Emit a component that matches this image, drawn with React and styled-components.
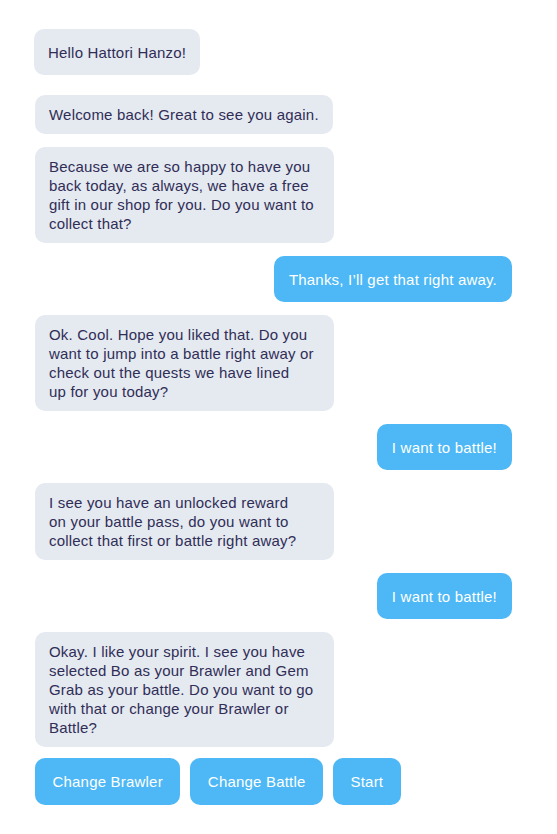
import React from 'react'
import styled, { createGlobalStyle } from 'styled-components'

const GlobalStyle = createGlobalStyle`
    body {
        margin: 0;
        background: #ffffff;
        font-family: "Liberation Sans", Arial, sans-serif;
    }
`

const messages = [
    { from: 'bot', first: true, lines: ['Hello Hattori Hanzo!'] },
    { from: 'bot', lines: ['Welcome back! Great to see you again.'] },
    {
        from: 'bot',
        wide: true,
        lines: [
            'Because we are so happy to have you',
            'back today, as always, we have a free',
            'gift in our shop for you. Do you want to',
            'collect that?',
        ],
    },
    { from: 'user', lines: ['Thanks, I\u2019ll get that right away.'] },
    {
        from: 'bot',
        wide: true,
        lines: [
            'Ok. Cool. Hope you liked that. Do you',
            'want to jump into a battle right away or',
            'check out the quests we have lined',
            'up for you today?',
        ],
    },
    { from: 'user', lines: ['I want to battle!'] },
    {
        from: 'bot',
        wide: true,
        lines: [
            'I see you have an unlocked reward',
            'on your battle pass, do you want to',
            'collect that first or battle right away?',
        ],
    },
    { from: 'user', lines: ['I want to battle!'] },
    {
        from: 'bot',
        wide: true,
        lines: [
            'Okay. I like your spirit. I see you have',
            'selected Bo as your Brawler and Gem',
            'Grab as your battle. Do you want to go',
            'with that or change your Brawler or',
            'Battle?',
        ],
    },
]

const actions = ['Change Brawler', 'Change Battle', 'Start']

const App = () => {

    return <>
        <GlobalStyle />
        <Wrapper>
            {messages.map((message, index) => (

                message.from === 'user'
                    ? <UserBubble key={index}>{message.lines[0]}</UserBubble>
                    : <BotBubble key={index} $wide={message.wide} $first={message.first}>
                        {message.lines.map((line, i) => (
                            <React.Fragment key={i}>
                                {line}
                                {i < message.lines.length - 1 && <br />}
                            </React.Fragment>
                        ))}
                    </BotBubble>

            ))}

            <Actions>
                {actions.map((label) => (
                    <ActionButton key={label}>{label}</ActionButton>
                ))}
            </Actions>
        </Wrapper>
    </>
}

export default App

const Wrapper = styled.div`
    display: flex;
    flex-direction: column;
    align-items: flex-start;
    gap: 13px;
    padding: 29px 45px 30px 35px;
`

const BotBubble = styled.div`
    box-sizing: border-box;
    width: ${(p) => (p.$wide ? '299px' : 'auto')};
    padding: ${(p) => (p.$first ? '13.5px 14px' : '10px 14px')};
    margin-bottom: ${(p) => (p.$first ? '7px' : '0')};
    margin-left: ${(p) => (p.$first ? '-1px' : '0')};
    background-color: #e5e9f0;
    color: #302e57;
    border-radius: 10px;
    font-size: 15px;
    line-height: 19px;
    letter-spacing: 0.2px;
    white-space: nowrap;
`

const UserBubble = styled.div`
    align-self: flex-end;
    padding: 13.5px 15px 13.5px 15px;
    background-color: #4db8f5;
    color: #ffffff;
    border-radius: 10px;
    font-size: 15px;
    line-height: 19px;
    letter-spacing: 0.2px;
    white-space: nowrap;
`

const Actions = styled.div`
    display: flex;
    gap: 10px;
    margin-top: -2px;
`

const ActionButton = styled.button`
    padding: 14px 17.5px;
    border: none;
    background-color: #4db8f5;
    color: #ffffff;
    border-radius: 10px;
    font-family: "Liberation Sans", Arial, sans-serif;
    font-size: 15px;
    line-height: 19px;
    letter-spacing: 0.2px;
    cursor: pointer;
`
